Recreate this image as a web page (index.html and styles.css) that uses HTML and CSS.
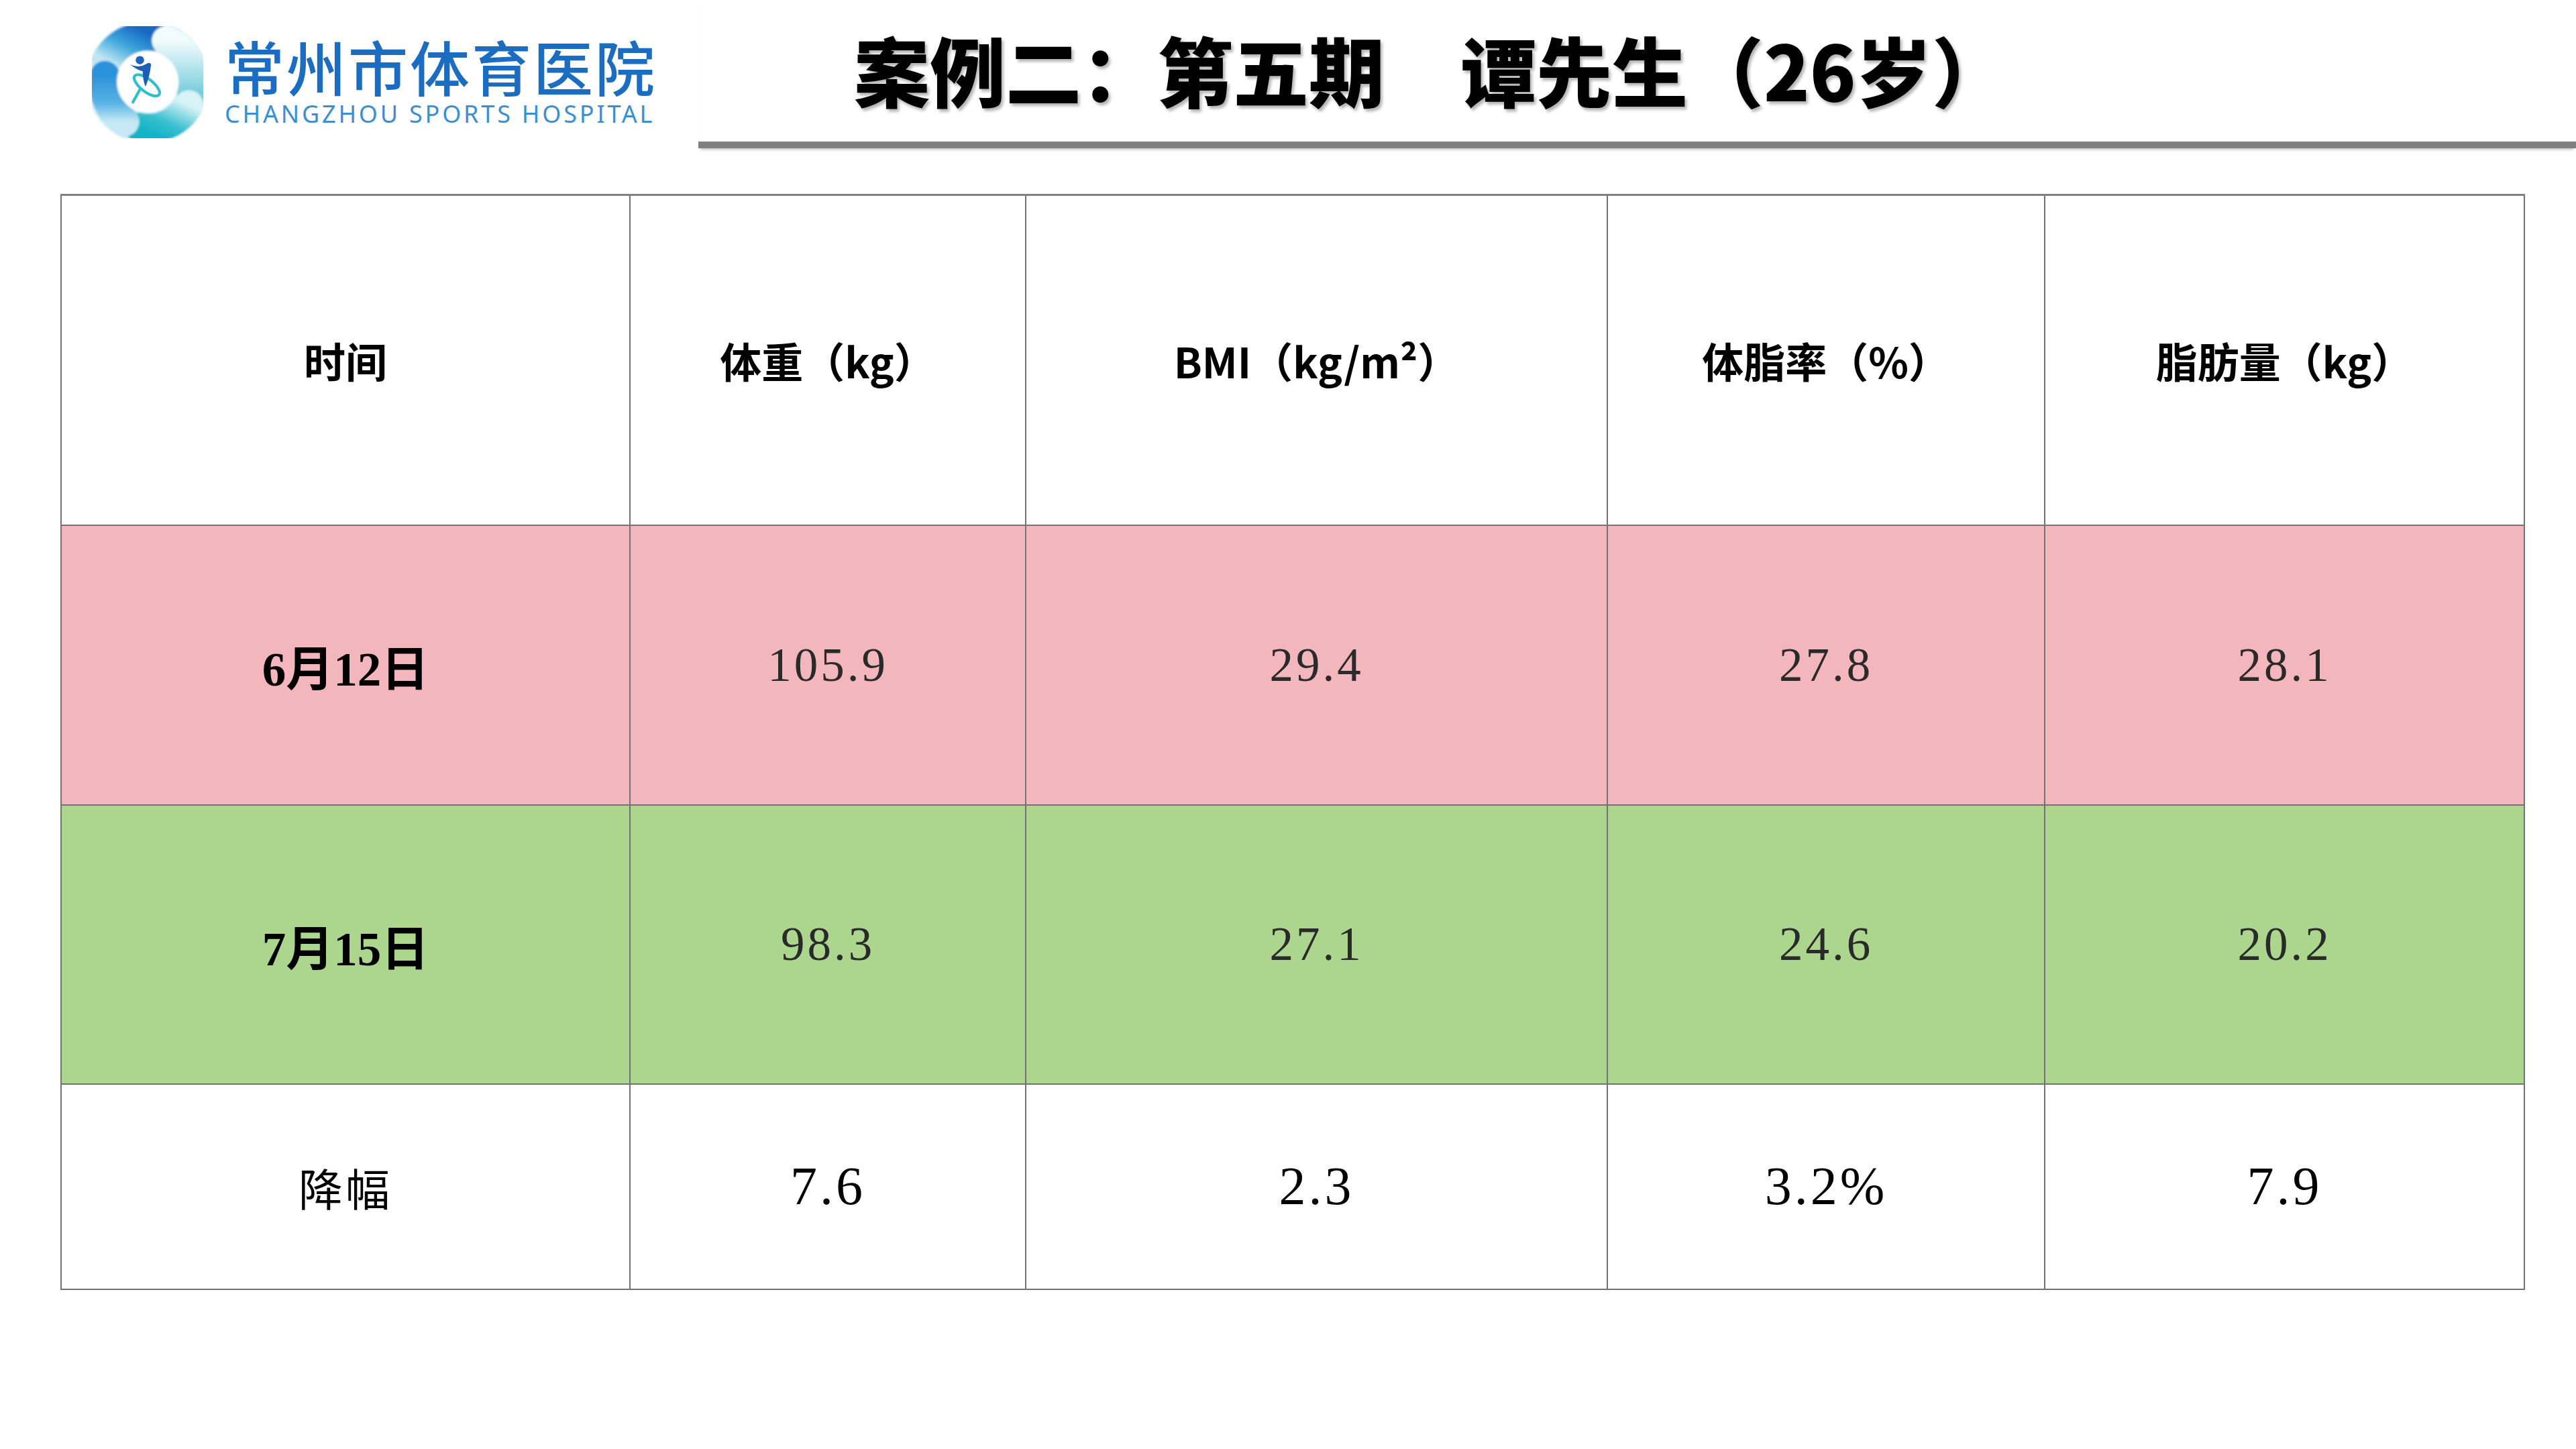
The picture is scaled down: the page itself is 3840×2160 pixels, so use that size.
FILE: index.html
```html
<!DOCTYPE html>
<html lang="zh-CN">
<head>
<meta charset="utf-8">
<title>案例二：第五期 谭先生（26岁）</title>
<link rel="stylesheet" href="styles.css">
</head>
<body>
<div class="slide">
  <header class="top">
    <div class="brand">
      <svg class="logo-mark" viewBox="0 0 190 190" width="198" height="198" aria-hidden="true">
        <defs>
          <linearGradient id="gTop" x1="0" y1="1" x2="1" y2="0">
            <stop offset="0" stop-color="#bfe6f3"/>
            <stop offset="0.5" stop-color="#3ea6dc"/>
            <stop offset="1" stop-color="#1769c2"/>
          </linearGradient>
          <linearGradient id="gRight" x1="0" y1="0" x2="0" y2="1">
            <stop offset="0" stop-color="#f2fbfd"/>
            <stop offset="0.6" stop-color="#a7dfe9"/>
            <stop offset="1" stop-color="#6fcbd9"/>
          </linearGradient>
          <linearGradient id="gBottom" x1="1" y1="0" x2="0" y2="1">
            <stop offset="0" stop-color="#d9f3f6"/>
            <stop offset="0.6" stop-color="#39bfcf"/>
            <stop offset="1" stop-color="#13b3c6"/>
          </linearGradient>
          <linearGradient id="gLeft" x1="0" y1="0" x2="0" y2="1">
            <stop offset="0" stop-color="#2c92d9"/>
            <stop offset="0.6" stop-color="#58b3e4"/>
            <stop offset="1" stop-color="#c6e9f5"/>
          </linearGradient>
          <filter id="soft" x="-10%" y="-10%" width="120%" height="120%">
            <feGaussianBlur stdDeviation="1.4"/>
          </filter>
        </defs>
        <g filter="url(#soft)">
          <circle cx="95" cy="95" r="66" fill="none" stroke="#d6eef6" stroke-width="44"/>
          <path d="M 37 64 A 66 66 0 0 1 104 30" fill="none" stroke="url(#gTop)" stroke-width="42" stroke-linecap="round"/>
          <path d="M 122 36 A 66 66 0 0 1 158 114" fill="none" stroke="url(#gRight)" stroke-width="42" stroke-linecap="round"/>
          <path d="M 154 128 A 66 66 0 0 1 83 160" fill="none" stroke="url(#gBottom)" stroke-width="42" stroke-linecap="round"/>
          <path d="M 34 86 A 66 66 0 0 0 62 152" fill="none" stroke="url(#gLeft)" stroke-width="42" stroke-linecap="round"/>
          <circle cx="95" cy="95" r="44" fill="#ffffff"/>
        </g>
        <ellipse cx="94" cy="100" rx="22" ry="9" transform="rotate(38 94 100)" fill="none" stroke="#2cc0cf" stroke-width="4"/>
        <path d="M 84 106 L 74 124" stroke="#2cc0cf" stroke-width="4" stroke-linecap="round"/>
        <circle cx="84" cy="64" r="6" fill="#1f63b8"/>
        <path d="M 70 70 Q 82 76 92 70 Q 98 66 100 70 Q 98 88 92 102 Q 88 92 88 80 Q 80 78 70 70 Z" fill="#1a5fb6"/>
      </svg>
      <div class="brand-text">
        <div class="brand-cn">常州市体育医院</div>
        <div class="brand-en">CHANGZHOU SPORTS HOSPITAL</div>
      </div>
    </div>
    <div class="title-bar">
      <h1 class="title">案例二：第五期　谭先生（26岁）</h1>
    </div>
  </header>

  <table class="data-table">
    <colgroup>
      <col class="c1"><col class="c2"><col class="c3"><col class="c4"><col class="c5">
    </colgroup>
    <thead>
      <tr class="row-head">
        <th>时间</th>
        <th>体重（kg）</th>
        <th>BMI（kg/m²）</th>
        <th>体脂率（%）</th>
        <th>脂肪量（kg）</th>
      </tr>
    </thead>
    <tbody>
      <tr class="row-before">
        <td class="date">6月12日</td>
        <td>105.9</td>
        <td>29.4</td>
        <td>27.8</td>
        <td>28.1</td>
      </tr>
      <tr class="row-after">
        <td class="date">7月15日</td>
        <td>98.3</td>
        <td>27.1</td>
        <td>24.6</td>
        <td>20.2</td>
      </tr>
      <tr class="row-drop">
        <td class="label">降幅</td>
        <td>7.6</td>
        <td>2.3</td>
        <td>3.2%</td>
        <td>7.9</td>
      </tr>
    </tbody>
  </table>
</div>
</body>
</html>
```

FILE: styles.css
```css
html, body {
  margin: 0;
  padding: 0;
  background: #ffffff;
}

.slide {
  width: 3840px;
  height: 2160px;
  overflow: hidden;
  background: #ffffff;
  font-family: "Noto Sans CJK SC", "Noto Sans", sans-serif;
}

.top {
  display: flex;
  height: 221px;
}

.brand {
  width: 1041px;
  box-sizing: border-box;
  padding-left: 121px;
  padding-top: 23px;
  display: flex;
  align-items: flex-start;
  gap: 16px;
}

.logo-mark {
  flex: none;
  display: block;
}

.brand-text {
  padding-top: 29px;
  display: flex;
  flex-direction: column;
}

.brand-cn {
  font-family: "Noto Sans CJK SC", sans-serif;
  font-size: 89px;
  line-height: 92px;
  font-weight: 500;
  color: #1b6dc1;
  letter-spacing: 3px;
  white-space: nowrap;
}

.brand-en {
  font-family: "Noto Sans", "DejaVu Sans", sans-serif;
  font-size: 36px;
  line-height: 40px;
  margin-top: 6px;
  color: #3a8fd3;
  letter-spacing: 3.8px;
  white-space: nowrap;
}

.title-bar {
  flex: 1;
  border-bottom: 10px solid #808080;
  box-shadow: 0 5px 4px -3px rgba(0, 0, 0, 0.25);
  padding-left: 232px;
  padding-top: 46px;
}

.title {
  margin: 0;
  font-family: "Noto Sans CJK SC", sans-serif;
  font-size: 113px;
  line-height: 113px;
  font-weight: 900;
  color: #000000;
  white-space: nowrap;
  text-shadow: 3px 4px 4px rgba(0, 0, 0, 0.3);
}

.data-table {
  margin-top: 68px;
  margin-left: 90px;
  width: 3672px;
  table-layout: fixed;
  border-collapse: collapse;
}

.c1 { width: 848px; }
.c2 { width: 590px; }
.c3 { width: 867px; }
.c4 { width: 652px; }
.c5 { width: 715px; }

.data-table th,
.data-table td {
  border: 2px solid #737373;
  text-align: center;
  vertical-align: middle;
  padding: 0;
}

.row-head th {
  border-top: 3px solid #808080;
  font-family: "Noto Sans CJK SC", sans-serif;
  font-weight: 700;
  font-size: 62px;
  color: #000000;
}

.row-head { height: 492px; }
.row-before { height: 417px; background: #f4b6bd; }
.row-after { height: 416px; background: #acd68d; }
.row-drop { height: 306px; background: #ffffff; }

.row-before td,
.row-after td {
  font-family: "Liberation Serif", "Noto Sans CJK SC", serif;
  font-size: 71px;
  color: #2a2a2a;
  letter-spacing: 4px;
}

.data-table td.date {
  font-weight: 700;
  color: #000000;
  letter-spacing: 0;
}

.row-drop td {
  font-family: "Liberation Serif", "Noto Sans CJK SC", serif;
  font-size: 80px;
  color: #000000;
  letter-spacing: 4px;
}

.data-table td.label {
  font-family: "Noto Sans CJK SC", sans-serif;
  font-size: 66px;
  font-weight: 400;
  letter-spacing: 4px;
}
```
